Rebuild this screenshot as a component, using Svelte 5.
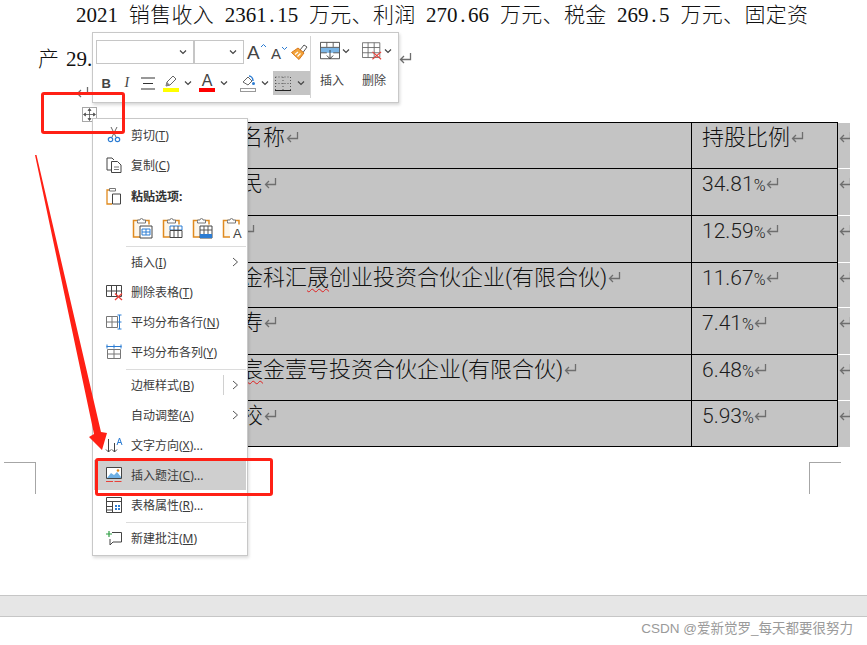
<script>
  const rows = [
    { h: 46, name: "名称", pct: "持股比例", head: true },
    { h: 47, name: "民", pct: "34.81" },
    { h: 47, name: "", pct: "12.59" },
    { h: 45, name: "金科汇", wavy: "晟", rest: "创业投资合伙企业(有限合伙)", pct: "11.67" },
    { h: 47, name: "寿", pct: "7.41" },
    { h: 46, name: "", wavy: "宸", rest: "金壹号投资合伙企业(有限合伙)", pct: "6.48" },
    { h: 47, name: "校", pct: "5.93" }
  ];
</script>

{#snippet ret()}
  <svg class="ret" width="13" height="12" viewBox="0 0 13 12"><path d="M11.500 1v6.500H1.500M5 4L1.500 7.500 5 11" fill="none" stroke="#6e6e6e" stroke-width="1.300"/></svg>
{/snippet}

{#snippet caret()}
  <svg class="caret" width="8" height="6" viewBox="0 0 8 6"><path d="M1 1.500l3 3 3-3" fill="none" stroke="#444" stroke-width="1.200"/></svg>
{/snippet}

{#snippet chevron()}
  <svg class="chev" width="7" height="10" viewBox="0 0 7 10"><path d="M1 1l4.500 4L1 9" fill="none" stroke="#555" stroke-width="1"/></svg>
{/snippet}

{#snippet pasteBase()}
  <path d="M7 3.500H1.500v16.500H8" fill="#fdf6ea" stroke="#e08a1e" stroke-width="1.500"/>
  <path d="M13 3.500h4v4" fill="none" stroke="#e08a1e" stroke-width="1.500"/>
  <path d="M5.500 4.500v-1.500h2.500a1.500 1.500 0 0 1 3 0h2.500v3h-8z" fill="#fff" stroke="#777"/>
{/snippet}

<div class="page">
  <div class="line first">
    <span class="m">2021</span><span class="sp"></span>销售收入<span class="sp"></span><span class="m">2361<i class="dot">.</i>15</span><span class="sp"></span>万元、利润<span class="sp"></span><span class="m">270<i class="dot">.</i>66</span><span class="sp"></span>万元、税金<span class="sp"></span><span class="m">269<i class="dot">.</i>5</span><span class="sp"></span>万元、固定资
  </div>
  <div class="line second">
    产<span class="m gap">29.</span><span class="end-mark">{@render ret()}</span>
  </div>
  <div class="empty-line">{@render ret()}</div>

  <div class="table">
    {#each rows as row}
      <div class="row" style="height: {row.h}px">
        <div class="cell name">{row.name}{#if row.wavy}<span class="wavy">{row.wavy}</span>{row.rest}{/if}{@render ret()}</div>
        <div class="cell pct" class:head={row.head}>
          {#if row.head}{row.pct}{:else}{row.pct}<span class="percent">%</span>{/if}{@render ret()}
        </div>
        <div class="cell tail">{@render ret()}</div>
      </div>
    {/each}
  </div>

  <div class="corners">
    <div class="corner left"></div>
    <div class="corner right"></div>
  </div>

  <div class="statusbar"></div>
  <div class="footer">CSDN @爱新觉罗_每天都要很努力</div>

  <!-- table move handle -->
  <div class="handle">
    <svg width="13" height="13" viewBox="0 0 13 13"><path d="M6.500 1v11M1 6.500h11M6.500 .5L5 2.500h3zM6.500 12.500L5 10.500h3zM.5 6.500l2-1.500v3zM12.500 6.500l-2-1.500v3z" fill="#555" stroke="#555" stroke-width=".8"/></svg>
  </div>

  <!-- mini toolbar -->
  <div class="toolbar">
    <div class="tb-left">
      <div class="tb-row">
        <div class="select font">{@render caret()}</div>
        <div class="select size">{@render caret()}</div>
        <span class="grow big">A<svg width="7" height="5" viewBox="0 0 7 5"><path d="M1 4l2.500-2.500L6 4" fill="none" stroke="#2b7cd3" stroke-width="1"/></svg></span>
        <span class="grow small">A<svg width="7" height="5" viewBox="0 0 7 5"><path d="M1 1l2.500 2.500L6 1" fill="none" stroke="#2b7cd3" stroke-width="1"/></svg></span>
        <svg class="brush" width="17" height="16" viewBox="0 0 17 16">
          <path d="M9 6l4-5 3 2-4 5.500z" fill="#fff" stroke="#555"/>
          <path d="M.5 8.500L7 4l6 5-5 6.500z" fill="#f2a33a" stroke="#d9781c"/>
          <path d="M4 10.500l3-2.500M6.500 12.500l3-3" stroke="#fff" stroke-width="1.200"/>
        </svg>
      </div>
      <div class="tb-row second-row">
        <span class="fmt bold">B</span>
        <span class="fmt italic">I</span>
        <svg class="align" width="14" height="13" viewBox="0 0 14 13"><path d="M0 1h14M2 6.500h10M0 12h14" stroke="#333" stroke-width="1.200"/></svg>
        <div class="color-btn">
          <svg width="16" height="12" viewBox="0 0 16 12"><path d="M3 11l1-4 6-6 3 3-6 6z" fill="#fff" stroke="#666"/><path d="M3 11l1-4 3 3z" fill="#888"/></svg>
          <i class="bar yellow"></i>
        </div>
        {@render caret()}
        <div class="color-btn letter">
          <span>A</span>
          <i class="bar red"></i>
        </div>
        {@render caret()}
        <div class="color-btn fill">
          <svg width="16" height="12" viewBox="0 0 16 12"><path d="M3 7l5-5 4 4-4 4z" fill="#fff" stroke="#666"/><path d="M9 1c2 0 4 2 4 5" fill="none" stroke="#2b7cd3" stroke-width="1.500"/><circle cx="13.500" cy="8.500" r="1.500" fill="#2b7cd3"/></svg>
          <i class="bar outline"></i>
        </div>
        {@render caret()}
        <div class="border-btn">
          <svg width="16" height="15" viewBox="0 0 16 15"><path d="M.5 1h15M.5 1v13M15.500 1v13M8 1v13M.5 7.500h15" fill="none" stroke="#555" stroke-dasharray="1 2"/><path d="M0 14.500h16" stroke="#222"/></svg>
          {@render caret()}
        </div>
      </div>
    </div>
    <div class="tb-right">
      <div class="tb-action">
        <div class="tb-icon">
          <svg width="22" height="20" viewBox="0 0 22 20">
            <path d="M.5.500h21v18h-21z" fill="#fff" stroke="#444"/>
            <path d="M1 6h20v6H1z" fill="#7cb6e6"/>
            <path d="M.5 6h21M7.500.500v5M14.500.500v5M.5 12h7M14.500 12h7" stroke="#555" fill="none"/>
            <path d="M11 9v9M7.500 15l3.500 3.500 3.500-3.500" stroke="#333" fill="none"/>
          </svg>
          {@render caret()}
        </div>
        <span>插入</span>
      </div>
      <div class="tb-action">
        <div class="tb-icon">
          <svg width="23" height="20" viewBox="0 0 23 20">
            <path d="M.5.500h20v17H.5zM.5 6h20M.5 12h20M7 .500v17M14 .500v17" fill="#fff" stroke="#666"/>
            <path d="M12 11l10 8.500M22 11l-10 8.500" stroke="#e8413a" stroke-width="1.200"/>
          </svg>
          {@render caret()}
        </div>
        <span>删除</span>
      </div>
    </div>
  </div>

  <!-- context menu -->
  <div class="menu">
    <div class="item">
      <span class="ico"><svg width="18" height="18" viewBox="0 0 18 18"><path d="M6 1l5 10M12 1L7 11" stroke="#666" fill="none"/><circle cx="5.500" cy="13.500" r="2.200" fill="none" stroke="#2b7cd3" stroke-width="1.200"/><circle cx="12.500" cy="13.500" r="2.200" fill="none" stroke="#2b7cd3" stroke-width="1.200"/></svg></span>
      <span>剪切(<u>T</u>)</span>
    </div>
    <div class="item">
      <span class="ico"><svg width="18" height="18" viewBox="0 0 18 18"><path d="M7 14H2V2h5l2 2" fill="none" stroke="#444"/><path d="M6.500 5.500h6l3.500 3.500v7.500H6.500z" fill="#fff" stroke="#444"/><path d="M9 11h5M9 13.500h5" stroke="#777"/></svg></span>
      <span>复制(<u>C</u>)</span>
    </div>
    <div class="item title">
      <span class="ico"><svg width="18" height="18" viewBox="0 0 18 18"><path d="M5 3H2v14h5" fill="none" stroke="#e08a1e" stroke-width="1.300"/><path d="M4.500 4V1.500h6V4z" fill="#fff" stroke="#777"/><path d="M7.500 7h8v10h-8z" fill="#fff" stroke="#444"/></svg></span>
      <b>粘贴选项:</b>
    </div>
    <div class="paste-row">
      <svg width="21" height="22" viewBox="0 0 21 22">{@render pasteBase()}<path d="M8 9h12v12H8z" fill="#fff" stroke="#444"/><path d="M10 12h8v6h-8zM14 12v6M10 15h8" fill="none" stroke="#2b7cd3"/></svg>
      <svg width="21" height="22" viewBox="0 0 21 22">{@render pasteBase()}<path d="M8 9h12v4H8z" fill="#fff" stroke="#2b7cd3"/><path d="M8 13.500h12v7H8z" fill="#fff" stroke="#444"/><path d="M12 9v4M16 9v4M12 14v6M16 14v6" stroke="#555"/></svg>
      <svg width="21" height="22" viewBox="0 0 21 22">{@render pasteBase()}<path d="M8 9h12v12H8z" fill="#fff" stroke="#444"/><path d="M8 17h12v4H8z" fill="#2b7cd3"/><path d="M12 9v8M16 9v8M8 13h12" stroke="#555"/></svg>
      <svg width="21" height="22" viewBox="0 0 21 22">{@render pasteBase()}<text x="11" y="21" class="paste-a">A</text></svg>
    </div>
    <div class="sep"></div>
    <div class="item">
      <span class="ico"></span><span>插入(<u>I</u>)</span>{@render chevron()}
    </div>
    <div class="item">
      <span class="ico"><svg width="18" height="18" viewBox="0 0 18 18"><path d="M1.500 2.500h15v11h-15zM1.500 8h15M6.500 2.500v11M11.500 2.500v11" fill="none" stroke="#444"/><path d="M10 10.500l7 6.500M17 10.500l-7 6.500" stroke="#e8413a" stroke-width="1.300"/></svg></span>
      <span>删除表格(<u>T</u>)</span>
    </div>
    <div class="item">
      <span class="ico"><svg width="18" height="18" viewBox="0 0 18 18"><path d="M1.500 3.500h11v11h-11zM1.500 9h11M7 3.500v11" fill="none" stroke="#777"/><path d="M14.500 2v14M12.500 2h4M12.500 16h4M12.500 9h4" fill="none" stroke="#2b7cd3"/></svg></span>
      <span>平均分布各行(<u>N</u>)</span>
    </div>
    <div class="item">
      <span class="ico"><svg width="18" height="18" viewBox="0 0 18 18"><path d="M2.500 6.500h13v9h-13zM2.500 11h13M9 6.500v9" fill="none" stroke="#777"/><path d="M1.500 3.500h15M2 1.500v4M9 1.500v4M16 1.500v4" fill="none" stroke="#2b7cd3"/></svg></span>
      <span>平均分布各列(<u>Y</u>)</span>
    </div>
    <div class="sep"></div>
    <div class="item">
      <span class="ico"></span><span>边框样式(<u>B</u>)</span><i class="split"></i>{@render chevron()}
    </div>
    <div class="item">
      <span class="ico"></span><span>自动调整(<u>A</u>)</span>{@render chevron()}
    </div>
    <div class="item">
      <span class="ico"><svg width="18" height="18" viewBox="0 0 18 18"><path d="M3.500 3v13M1 13.500L3.500 16 6 13.500M9.500 7v9M7 13.500L9.500 16 12 13.500" fill="none" stroke="#444"/><path d="M12 9l2.500-7L17 9M13 6.500h3" fill="none" stroke="#2b7cd3"/></svg></span>
      <span>文字方向(<u>X</u>)...</span>
    </div>
    <div class="item active">
      <span class="ico"><svg width="18" height="18" viewBox="0 0 18 18"><path d="M1.500 1.500h15v11h-15z" fill="#fff" stroke="#444"/><path d="M2 12l4-5 3 2 3-3 4 5v1H2z" fill="#6fb0e4"/><circle cx="13" cy="4.500" r="1.300" fill="#e08a1e"/><path d="M1 15.500h16" stroke="#e8413a" stroke-dasharray="7 1.500"/></svg></span>
      <span>插入题注(<u>C</u>)...</span>
    </div>
    <div class="item">
      <span class="ico"><svg width="18" height="18" viewBox="0 0 18 18"><path d="M1.500 1.500h15v15h-15zM1.500 5.500h15M1.500 10.500h6M1.500 14h6M7.500 5.500v11" fill="none" stroke="#444"/><path d="M10 9h5v5h-5z" fill="#2b7cd3"/><path d="M12.500 9v5M10 11.500h5" stroke="#fff"/></svg></span>
      <span>表格属性(<u>R</u>)...</span>
    </div>
    <div class="sep"></div>
    <div class="item">
      <span class="ico"><svg width="18" height="18" viewBox="0 0 18 18"><path d="M7 3.500h9.500v9.500H8l-3 3v-6" fill="none" stroke="#444"/><path d="M1 5h6M4 2v6" stroke="#2f9e44" stroke-width="1.200"/></svg></span>
      <span>新建批注(<u>M</u>)</span>
    </div>
  </div>

  <!-- red annotations drawn over the screenshot -->
  <div class="mark mark-handle"></div>
  <div class="mark mark-item"></div>
  <svg class="arrow" width="120" height="310" viewBox="0 0 120 310">
    <path d="M35 5L36.500 5 101 282 107 283 102 300 89 287 94 284z" fill="#ff2015"/>
  </svg>
</div>

<style>
  :global(body) {
    background: #fff;
  }

  .page {
    position: relative;
    width: 867px;
    height: 645px;
    overflow: hidden;
    background: #fff;
    font-family: "Liberation Sans", "Noto Sans CJK SC", sans-serif;
    color: #111;
  }

  .line {
    font-family: "Noto Sans CJK SC", sans-serif;
    font-size: 21px;
    line-height: 26px;
    height: 26px;
    font-weight: 300;
  }

  .m {
    font-family: "Liberation Serif", serif;
    font-weight: 400;
  }

  .dot {
    display: inline-block;
    width: 10.5px;
    text-align: center;
    text-align-last: center;
    font-style: normal;
  }

  .sp {
    display: inline-block;
    width: 10.5px;
  }

  .first {
    width: 732px;
    padding-left: 76px;
    text-align: justify;
    text-align-last: justify;
  }

  .second {
    margin-top: 18px;
    padding-left: 38px;
  }

  .gap {
    margin-left: 7px;
  }

  .end-mark {
    margin-left: 306px;
  }

  .empty-line {
    height: 36px;
    padding: 16px 0 0 75px;
    line-height: 12px;
  }

  .ret {
    display: inline-block;
    vertical-align: 2px;
    margin-left: 1px;
  }

  .table {
    margin-left: 100px;
    width: 750px;
  }

  .row {
    display: grid;
    grid-template-columns: 591px 147px 12px;
    box-sizing: border-box;
  }

  .row:last-child .cell {
    border-bottom: 1px solid #000;
  }

  .row:last-child .tail {
    border-bottom-color: #c4c4c4;
  }

  .cell {
    background: #c4c4c4;
    border-top: 1px solid #000;
    font-family: Roboto, "Noto Sans CJK SC", sans-serif;
    font-size: 21px;
    line-height: 26px;
    padding-top: 2px;
    white-space: nowrap;
    overflow: hidden;
    font-weight: 300;
  }

  .name {
    padding-left: 141px;
    font-size: 22px;
  }

  .pct {
    border-left: 1px solid #000;
    border-right: 1px solid #000;
    padding-left: 10px;
    color: #1c1c1c;
  }

  .pct.head {
    font-size: 22px;
    color: #111;
  }

  .percent {
    font-size: 16px;
    letter-spacing: -1.5px;
    margin-right: 1px;
  }

  .tail {
    border-top-color: #fff;
  }

  .wavy {
    text-decoration: underline wavy #e02020 1px;
    text-underline-offset: 3px;
  }

  .corners {
    display: flex;
    justify-content: space-between;
    margin: 15px 26px 0 4px;
  }

  .corner {
    width: 32px;
    height: 32px;
    box-sizing: border-box;
    border-top: 1px solid #a6a6a6;
  }

  .corner.left {
    border-right: 1px solid #a6a6a6;
  }

  .corner.right {
    border-left: 1px solid #a6a6a6;
  }

  .statusbar {
    margin-top: 101px;
    height: 22px;
    box-sizing: border-box;
    background: #e6e6e6;
    border-top: 1px solid #c6c6c6;
    border-bottom: 1px solid #c6c6c6;
  }

  .footer {
    padding: 3px 14px 0 0;
    text-align: right;
    font-size: 13.5px;
    line-height: 17px;
    color: #9a9a9a;
  }

  .handle {
    position: absolute;
    left: 82px;
    top: 107px;
    width: 15px;
    height: 15px;
    box-sizing: border-box;
    background: #fff;
    border: 1px solid #a8a8a8;
    display: flex;
    align-items: center;
    justify-content: center;
  }

  .toolbar {
    position: absolute;
    left: 92px;
    top: 32px;
    width: 307px;
    height: 71px;
    box-sizing: border-box;
    display: flex;
    background: #fff;
    border: 1px solid #c8c8c8;
    box-shadow: 1px 2px 3px rgba(0, 0, 0, 0.16);
    padding: 7px 0 0 3px;
  }

  .tb-left {
    width: 214px;
    flex: none;
  }

  .tb-row {
    display: flex;
    align-items: center;
    height: 24px;
  }

  .second-row {
    margin-top: 7px;
  }

  .select {
    box-sizing: border-box;
    height: 24px;
    border: 1px solid #c6c6c6;
    display: flex;
    align-items: center;
    justify-content: flex-end;
    padding-right: 2px;
  }

  .select.font {
    width: 98px;
  }

  .select.size {
    width: 50px;
  }

  .grow {
    display: flex;
    color: #444;
    line-height: 1;
  }

  .grow.big {
    font-size: 19px;
    margin-left: 3px;
    width: 24px;
  }

  .grow.small {
    font-size: 15px;
    margin-top: 2px;
    width: 20px;
  }

  .brush {
    flex: none;
  }

  .fmt {
    font-size: 13px;
    width: 22px;
    text-align: center;
    color: #444;
  }

  .bold {
    font-weight: 700;
  }

  .italic {
    font-family: "Liberation Serif", serif;
    font-style: italic;
    font-size: 14px;
  }

  .align {
    margin: 0 8px 0 4px;
    flex: none;
  }

  .color-btn {
    width: 16px;
    flex: none;
    display: flex;
    flex-direction: column;
    align-items: center;
    margin-right: 5px;
    line-height: 1;
  }

  .color-btn.letter {
    margin-left: 3px;
    font-size: 16px;
    color: #444;
  }

  .color-btn.letter span {
    line-height: 12px;
  }

  .color-btn.fill {
    margin-left: 8px;
  }

  .bar {
    display: block;
    width: 16px;
    height: 4px;
    margin-top: 1px;
    box-sizing: border-box;
  }

  .yellow {
    background: #ffff00;
  }

  .red {
    background: #ff0000;
  }

  .outline {
    border: 1px solid #999;
    background: #fff;
  }

  .caret {
    flex: none;
    margin-right: 4px;
  }

  .border-btn {
    box-sizing: border-box;
    width: 37px;
    height: 24px;
    flex: none;
    background: #c4c4c4;
    display: flex;
    align-items: center;
    padding-left: 2px;
    gap: 6px;
  }

  .tb-right {
    flex: 1;
    margin: -4px 0 4px 0;
    border-left: 1px solid #d4d4d4;
    display: flex;
    padding-left: 9px;
    gap: 14px;
  }

  .tb-action {
    display: flex;
    flex-direction: column;
    width: 28px;
    font-family: "Noto Sans CJK SC", sans-serif;
    font-size: 12px;
    color: #444;
  }

  .tb-action span {
    margin-top: 11px;
    line-height: 16px;
    white-space: nowrap;
  }

  .tb-icon {
    display: flex;
    align-items: center;
    margin-top: 5px;
    gap: 2px;
    width: 34px;
  }

  .menu {
    position: absolute;
    left: 92px;
    top: 118px;
    width: 156px;
    height: 438px;
    box-sizing: border-box;
    background: #fff;
    border: 1px solid #c8c8c8;
    box-shadow: 1px 2px 3px rgba(0, 0, 0, 0.14);
    padding-top: 1px;
    font-family: "Noto Sans", "Noto Sans CJK SC", sans-serif;
    font-size: 12px;
    color: #3c3c3c;
  }

  .item {
    position: relative;
    display: flex;
    align-items: center;
    height: 30px;
    margin-left: 1px;
    padding-left: 11px;
    white-space: nowrap;
  }

  .item.title {
    height: 32px;
    color: #333;
  }

  .item.active {
    background: #cfcfcf;
    margin-right: 1px;
  }

  .ico {
    width: 18px;
    height: 18px;
    flex: none;
    margin-right: 8px;
    display: block;
  }

  .ico svg {
    display: block;
  }

  .paste-row {
    display: flex;
    gap: 9px;
    padding-left: 39px;
    height: 32px;
    align-items: center;
  }

  .paste-a {
    font-family: "Liberation Sans", sans-serif;
    font-size: 13px;
    fill: #444;
  }

  .sep {
    height: 1px;
    margin: 2px 1px 0 33px;
    background: #dcdcdc;
  }

  .chev {
    position: absolute;
    left: 138px;
    top: 10px;
  }

  .split {
    position: absolute;
    left: 129px;
    top: 5px;
    width: 1px;
    height: 20px;
    background: #d0d0d0;
  }

  .mark {
    position: absolute;
    box-sizing: border-box;
    border: 3px solid #ff2015;
    border-radius: 3px;
  }

  .mark-handle {
    left: 41px;
    top: 92px;
    width: 84px;
    height: 42px;
  }

  .mark-item {
    left: 95px;
    top: 458px;
    width: 178px;
    height: 38px;
  }

  .arrow {
    position: absolute;
    left: 0;
    top: 150px;
  }
</style>
